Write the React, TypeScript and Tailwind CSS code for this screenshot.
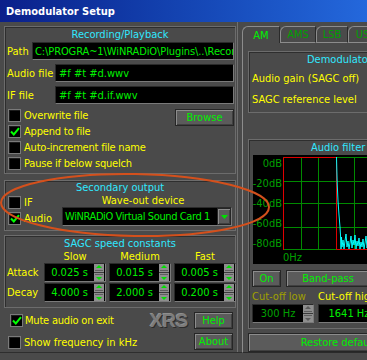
import React from "react";

const FONT = "font-['DejaVu_Sans_Condensed','Liberation_Sans',sans-serif]";
const GROUP = "border border-[#6c6c6c] shadow-[inset_1px_1px_0_#2e2e2e]";
const SUNKEN =
  "bg-black border border-t-[#2a2a2a] border-l-[#2a2a2a] border-b-[#7a7a7a] border-r-[#7a7a7a]";
const RAISED =
  "bg-[#5b5b5b] border border-[#262626] shadow-[inset_1px_1px_0_#8c8c8c,inset_-1px_-1px_0_#404040] flex items-center justify-center";
const YEL = "text-[#ffff00]";
const CYAN = "text-[#30e8ff]";
const GRN = "text-[#00f000]";

function Check({ checked }: { checked?: boolean }) {
  return (
    <div className="w-[13px] h-[13px] shrink-0 border border-[#7a7a7a] bg-black shadow-[inset_1px_1px_0_#1c1c1c] flex items-center justify-center">
      {checked ? (
        <svg width="10" height="9" viewBox="0 0 10 9">
          <path d="M1 4.5 L3.8 7.5 L9 1.2" fill="none" stroke="#00ff00" strokeWidth="2" />
        </svg>
      ) : null}
    </div>
  );
}

function Spin({ dim }: { dim?: boolean }) {
  const tri = dim ? "#5a5a5a" : "#00e000";
  return (
    <div className="flex flex-col w-[10px] h-full shrink-0 bg-[#3a3a3a] gap-px">
      <div className="flex-1 bg-[#8e8e8e] flex flex-col items-center justify-start pt-[1px]">
        <svg width="6" height="3" viewBox="0 0 6 3">
          <path d="M0 3 L3 0 L6 3Z" fill={tri} />
        </svg>
        <div className="w-[8px] h-px bg-[#5e5e5e] mt-[2px]" />
      </div>
      <div className="flex-1 bg-[#8e8e8e] flex flex-col items-center justify-end pb-[1px]">
        <div className="w-[8px] h-px bg-[#5e5e5e] mb-[2px]" />
        <svg width="6" height="3" viewBox="0 0 6 3">
          <path d="M0 0 L3 3 L6 0Z" fill={tri} />
        </svg>
      </div>
    </div>
  );
}

function Val({ v }: { v: string }) {
  return (
    <div className={`${SUNKEN} h-[19px] flex items-center pr-[1px]`}>
      <span className={`flex-1 text-center ${GRN} leading-[13px]`}>{v}</span>
      <Spin />
    </div>
  );
}

function Graph() {
  const hs = [2, 26, 48, 72, 94];
  const vs = [30, 48, 65, 83, 101, 119];
  const noise =
    "83.5,2 83.8,14 84.2,28 85,46 86,60 87,72 87.5,80 88,94 88.5,82 89,92 90,85 91,94 92,86 93,79 94,92 95,86 96,94 97,88 98,81 99,93 100,85 101,90 102,80 103,94 104,86 105,91 106,83 107,94 108,87 109,92 110,84 111,94 112,88 113,81 114,93 115,87 116,94 117,85 118,92 119,88 120,94";
  const lbl = {
    fontSize: 11,
    fill: "#00a000",
    fontFamily: "DejaVu Sans Condensed, Liberation Sans, sans-serif",
  } as const;
  return (
    <svg width="120" height="109" className="block">
      <rect width="120" height="109" fill="#000" />
      {hs.map((y) => (
        <line key={"h" + y} x1="30" x2="120" y1={y + 0.5} y2={y + 0.5} stroke="#008a00" />
      ))}
      {vs.map((x) => (
        <line key={"v" + x} x1={x + 0.5} x2={x + 0.5} y1="2" y2="95" stroke="#008a00" />
      ))}
      <path d="M30.5 95 V2.5 H83.5 V94.5 H120" fill="none" stroke="#e00000" />
      <polyline points={noise} fill="none" stroke="#00ffff" />
      <text x="29" y="12" textAnchor="end" style={lbl}>0dB</text>
      <text x="29" y="32" textAnchor="end" style={lbl}>-20dB</text>
      <text x="29" y="52" textAnchor="end" style={lbl}>-40dB</text>
      <text x="29" y="72" textAnchor="end" style={lbl}>-60dB</text>
      <text x="29" y="92" textAnchor="end" style={lbl}>-80dB</text>
      <text x="30" y="106" style={lbl}>0Hz</text>
    </svg>
  );
}

function Left() {
  const rows: [string, boolean][] = [
    ["Overwrite file", false],
    ["Append to file", true],
    ["Auto-increment file name", false],
    ["Pause if below squelch", false],
  ];
  return (
    <div className="w-[237px] shrink-0 pl-[4px] pt-[4px] flex flex-col">
      <div className={`${GROUP} w-[232px] h-[148px] flex flex-col`}>
        <div className={`${CYAN} text-center pt-[1px] leading-[13px]`}>Recording/Playback</div>
        <div className="flex items-center mt-[1px] h-[18px]">
          <span className={`${YEL} ml-[2px]`}>Path</span>
          <div
            className={`${SUNKEN} ml-auto mr-[1px] w-[202px] h-[18px] ${GRN} pl-[2px] flex items-center whitespace-nowrap overflow-hidden tracking-[-0.1px]`}
          >
            C:\PROGRA~1\WiNRADiO\Plugins\..\Recordings
          </div>
        </div>
        <div className="flex items-center mt-[4px] h-[18px]">
          <span className={`${YEL} ml-[2px]`}>Audio file</span>
          <div className={`${SUNKEN} ml-auto mr-[1px] w-[179px] h-[18px] ${GRN} pl-[3px] flex items-center`}>
            #f #t #d.wwv
          </div>
        </div>
        <div className="flex items-center mt-[4px] h-[18px]">
          <span className={`${YEL} ml-[2px]`}>IF file</span>
          <div className={`${SUNKEN} ml-auto mr-[1px] w-[179px] h-[18px] ${GRN} pl-[3px] flex items-center`}>
            #f #t #d.if.wwv
          </div>
        </div>
        <div className="flex mt-[3px]">
          <div className="flex flex-col">
            {rows.map(([label, c]) => (
              <div key={label} className="flex items-center h-[16px] ml-[3px]">
                <Check checked={c} />
                <span className={`${YEL} ml-[3px] whitespace-nowrap tracking-[-0.2px]`}>{label}</span>
              </div>
            ))}
          </div>
          <div className={`${RAISED} ml-auto mr-[1px] mt-[2px] w-[59px] h-[17px] ${GRN}`}>Browse</div>
        </div>
      </div>

      <div className={`${GROUP} w-[232px] h-[51px] mt-[6px] flex flex-col`}>
        <div className={`${CYAN} text-center leading-[13px]`}>Secondary output</div>
        <div className="flex">
          <div className="flex flex-col ml-[3px] w-[54px]">
            <div className="flex items-center h-[13px] mt-[2px]">
              <Check />
              <span className={`${YEL} ml-[3px]`}>IF</span>
            </div>
            <div className="flex items-center h-[13px] mt-[3px]">
              <Check checked />
              <span className={`${YEL} ml-[3px]`}>Audio</span>
            </div>
          </div>
          <div className="flex flex-col w-[170px]">
            <div className={`${YEL} text-center leading-[13px] pr-[8px]`}>Wave-out device</div>
            <div className={`${SUNKEN} h-[19px] flex items-center`}>
              <span className={`${GRN} pl-[2px] flex-1 whitespace-nowrap overflow-hidden tracking-[-0.4px]`}>
                WiNRADiO Virtual Sound Card 1
              </span>
              <div className={`${RAISED} w-[14px] h-[17px] shrink-0`}>
                <svg width="7" height="4" viewBox="0 0 7 4">
                  <path d="M0 0 L3.5 4 L7 0Z" fill="#00e000" />
                </svg>
              </div>
            </div>
          </div>
        </div>
      </div>

      <div className={`${GROUP} w-[232px] h-[73px] mt-[4px] flex flex-col`}>
        <div className={`${CYAN} text-center pt-[1px] leading-[13px]`}>SAGC speed constants</div>
        <div className={`grid grid-cols-[36px_62px_62px_62px] gap-x-[3px] leading-[13px] ${YEL}`}>
          <div />
          <div className="text-center">Slow</div>
          <div className="text-center">Medium</div>
          <div className="text-center">Fast</div>
        </div>
        <div className="grid grid-cols-[36px_62px_62px_62px] gap-x-[3px] items-center">
          <div className={`${YEL} pl-[2px]`}>Attack</div>
          <Val v="0.025 s" />
          <Val v="0.015 s" />
          <Val v="0.005 s" />
        </div>
        <div className="grid grid-cols-[36px_62px_62px_62px] gap-x-[3px] items-center mt-[1px]">
          <div className={`${YEL} pl-[2px]`}>Decay</div>
          <Val v="4.000 s" />
          <Val v="2.000 s" />
          <Val v="0.200 s" />
        </div>
      </div>

      <div className="flex mt-[4px]">
        <div className="w-[146px] shrink-0 flex flex-col">
          <div className="flex items-center h-[14px] mt-[1px] ml-[6px]">
            <Check checked />
            <span className={`${YEL} ml-[2px] whitespace-nowrap tracking-[-0.2px]`}>Mute audio on exit</span>
          </div>
          <div className="flex items-center h-[14px] mt-[8px] ml-[4px]">
            <Check />
            <span className={`${YEL} ml-[3px] whitespace-nowrap`}>Show frequency in kHz</span>
          </div>
        </div>
        <div className="w-[37px] shrink-0 -mt-[3px] font-['Liberation_Sans',sans-serif] font-bold text-[19px] leading-[24px] tracking-[-0.5px] text-[#7c7c7c] [text-shadow:1px_1px_0_#2c2c2c,-1px_-1px_0_#8e8e8e]">
          XRS
        </div>
        <div className="flex flex-col ml-[7px]">
          <div className={`${RAISED} w-[39px] h-[17px] ${GRN}`}>Help</div>
          <div className={`${RAISED} w-[39px] h-[17px] mt-[4px] ${GRN}`}>About</div>
        </div>
      </div>
    </div>
  );
}

function Right() {
  const tab =
    "h-[17px] border-t border-l border-[#8c8c8c] border-r border-r-[#2a2a2a] rounded-tl-[6px] flex items-center justify-center shrink-0";
  return (
    <div className="flex shrink-0">
      <div className="w-px bg-[#707070] h-full" />
      <div className="w-[4px]" />
      <div className="w-[200px] shrink-0 pt-[4px] flex flex-col">
        <div className="flex h-[17px]">
          <div className={`${tab} w-[38px] text-[#00f000]`}>AM</div>
          <div className={`${tab} w-[36px] border-b border-b-[#8c8c8c] text-[#00a000]`}>AMS</div>
          <div className={`${tab} w-[32px] border-b border-b-[#8c8c8c] text-[#00a000]`}>LSB</div>
          <div className={`${tab} w-[36px] border-b border-b-[#8c8c8c] text-[#00a000]`}>USB</div>
          <div className="flex-1 border-b border-[#8c8c8c]" />
        </div>
        <div className="border-l border-[#8c8c8c] border-b border-b-[#2a2a2a] h-[314px] pl-[5px] flex flex-col">
          <div className={`${GROUP} mt-[8px] h-[62px] w-[180px] shrink-0`}>
            <div className={`${CYAN} pt-[1px] pl-[58px] leading-[13px] whitespace-nowrap`}>
              Demodulator settings
            </div>
            <div className={`${YEL} pl-[3px] mt-[6px] leading-[13px] whitespace-nowrap`}>
              Audio gain (SAGC off)
            </div>
            <div className={`${YEL} pl-[3px] mt-[8px] leading-[13px] whitespace-nowrap`}>
              SAGC reference level
            </div>
          </div>
          <div className={`${GROUP} mt-[26px] h-[190px] w-[180px] shrink-0 flex flex-col`}>
            <div className={`${CYAN} pt-[1px] pl-[62px] leading-[13px] whitespace-nowrap`}>
              Audio filter settings
            </div>
            <div className="ml-[4px] mt-[1px] h-[109px]">
              <Graph />
            </div>
            <div className="flex mt-[6px] ml-[3px] h-[17px]">
              <div className={`${RAISED} w-[29px] h-[17px] ${GRN}`}>On</div>
              <div className={`${RAISED} w-[84px] h-[17px] ml-[5px] ${GRN}`}>Band-pass</div>
            </div>
            <div className="flex mt-[3px] ml-[3px] leading-[13px] whitespace-nowrap">
              <span className="w-[66px] shrink-0 text-[#a0a000]">Cut-off low</span>
              <span className={YEL}>Cut-off high</span>
            </div>
            <div className="flex mt-[1px] ml-[3px]">
              <div className={`${SUNKEN} w-[62px] h-[19px] flex items-center shrink-0`}>
                <span className="flex-1 text-center text-[#00a000]">300 Hz</span>
                <Spin dim />
              </div>
              <div className={`${SUNKEN} w-[62px] h-[19px] ml-[4px] flex items-center shrink-0`}>
                <span className={`flex-1 text-center ${GRN}`}>1641 Hz</span>
              </div>
            </div>
          </div>
          <div className={`${RAISED} mt-[4px] w-[186px] h-[19px] shrink-0 ${GRN}`}>Restore defaults</div>
        </div>
      </div>
    </div>
  );
}

export default function App() {
  return (
    <div className={`relative w-[367px] h-[360px] overflow-hidden bg-[#4a4a4a] ${FONT} text-[11px] leading-[13px]`}>
      <div className="h-[22px] bg-linear-to-r from-[#0b1f8a] to-[#2468dc] text-white font-bold text-[11px] pl-[6px] flex items-center">
        Demodulator Setup
      </div>
      <div className="flex h-[331px] border-b border-[#2e2e2e]">
        <Left />
        <Right />
      </div>
      <svg className="absolute left-0 top-0 pointer-events-none" width="367" height="360">
        <ellipse
          cx="135"
          cy="205"
          rx="134"
          ry="31"
          fill="none"
          stroke="#d4501c"
          strokeWidth="2"
          transform="rotate(1 135 205)"
        />
      </svg>
    </div>
  );
}
